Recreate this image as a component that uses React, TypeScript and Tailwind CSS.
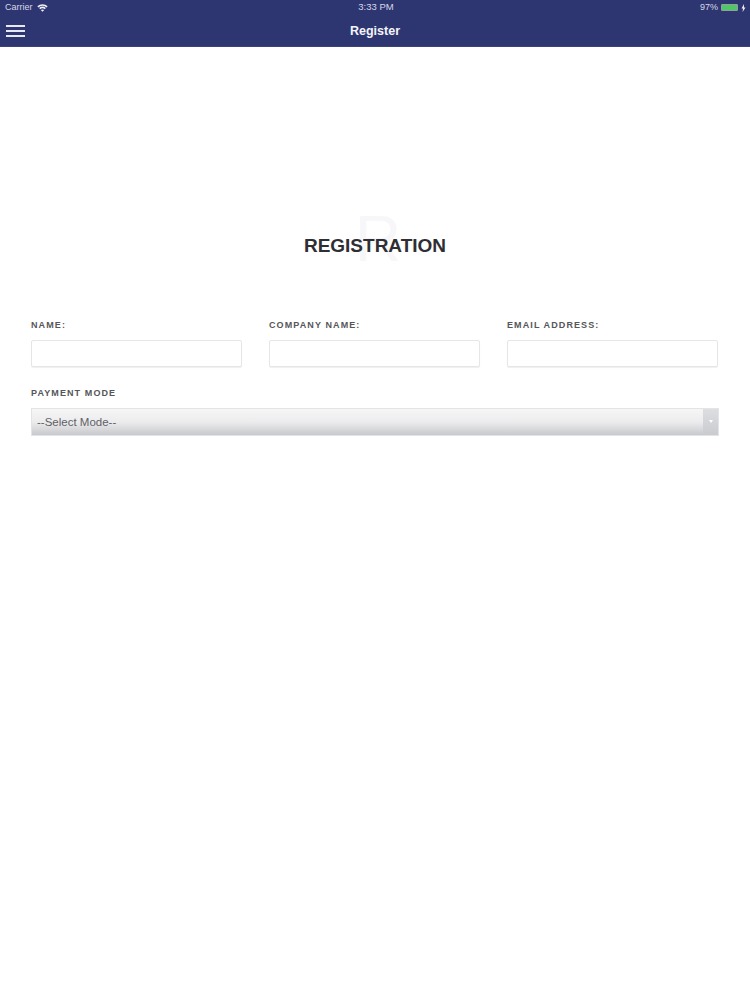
import React from 'react';

const sans = { fontFamily: '"Liberation Sans", Arial, sans-serif' };

const Field: React.FC<{ label: string }> = ({ label }) => (
  <div className="w-[211px]">
    <div className="h-[12px] text-[9px] leading-[12px] font-bold tracking-[1.1px] text-[#55565a]">{label}</div>
    <div className="mt-[9px] h-[27px] bg-white border border-[#e6e6e6] rounded-[2px] shadow-[0_1px_1px_#efefef]" />
  </div>
);

const App: React.FC = () => {
  return (
    <div className="w-[750px] h-[1000px] bg-white overflow-hidden" style={sans}>
      <header className="h-[47px] bg-[#2e3671] border-b border-[#3a4279] text-white">
        <div className="h-[15px] flex items-center justify-between pl-[5px] pr-[4px] text-[9px] text-[#d5d8e8]">
          <div className="flex items-center gap-[4px] w-[120px]">
            <span>Carrier</span>
            <svg width="11" height="8" viewBox="0 0 12 9" fill="none" stroke="#eef0f6" strokeWidth="1.7">
              <path d="M0.8 3.2C3.7 0.4 8.3 0.4 11.2 3.2" />
              <path d="M2.8 5.2C4.6 3.6 7.4 3.6 9.2 5.2" />
              <path d="M6 8.8 4.1 6.8C5.2 5.9 6.8 5.9 7.9 6.8Z" fill="#eef0f6" stroke="none" />
            </svg>
          </div>
          <span className="ml-[1px] text-[9.5px]">3:33 PM</span>
          <div className="flex items-center justify-end gap-[2px] w-[120px]">
            <span className="mr-[1px]">97%</span>
            <div className="w-[17px] h-[7px] bg-[#4fc765] rounded-[1px] border border-[#8fa0a0]" />
            <svg className="ml-[1px]" width="5" height="8" viewBox="0 0 5 8" fill="#e8eaf2">
              <path d="M3 0 0.5 4.5H2L1.6 8 4.5 3.4H3Z" />
            </svg>
          </div>
        </div>
        <div className="h-[31px] flex items-center relative">
          <div className="ml-[6px] w-[19px] flex flex-col gap-[3px]">
            <div className="h-[2px] bg-[#e6e8f2]" />
            <div className="h-[2px] bg-[#e6e8f2]" />
            <div className="h-[2px] bg-[#e6e8f2]" />
          </div>
          <div className="absolute inset-x-0 top-[8px] text-center text-[12.5px] leading-[16px] font-bold text-[#f4f5fa]">Register</div>
        </div>
      </header>

      <main className="px-[31px]">
        <div className="relative mt-[187px] h-[24px] flex items-center justify-center">
          <span className="absolute left-[324px] top-[-32px] text-[64px] leading-[74px] font-normal text-[#f7f7f9]">R</span>
          <h1 className="relative text-[19px] leading-[24px] font-bold text-[#2f2f33]">REGISTRATION</h1>
        </div>

        <div className="mt-[61px] flex gap-[27px]">
          <Field label="NAME:" />
          <Field label="COMPANY NAME:" />
          <Field label="EMAIL ADDRESS:" />
        </div>

        <div className="mt-[20px] h-[12px] text-[9px] leading-[12px] font-bold tracking-[1.1px] text-[#55565a]">PAYMENT MODE</div>
        <div className="mt-[9px] h-[28px] w-[688px] flex border border-[#e4e4e6] bg-gradient-to-b from-[#f6f6f7] via-[#ececee] to-[#c8c9cc]">
          <div className="flex-1 pl-[5px] text-[11.5px] leading-[27px] text-[#5f6064]">--Select Mode--</div>
          <div className="w-[15px] flex justify-center pt-[11px] bg-gradient-to-b from-[#dcdee1] to-[#c9cbcf]">
            <div className="w-0 h-0 border-x-[2px] border-x-transparent border-t-[3px] border-t-white" />
          </div>
        </div>
      </main>
    </div>
  );
};

export default App;
